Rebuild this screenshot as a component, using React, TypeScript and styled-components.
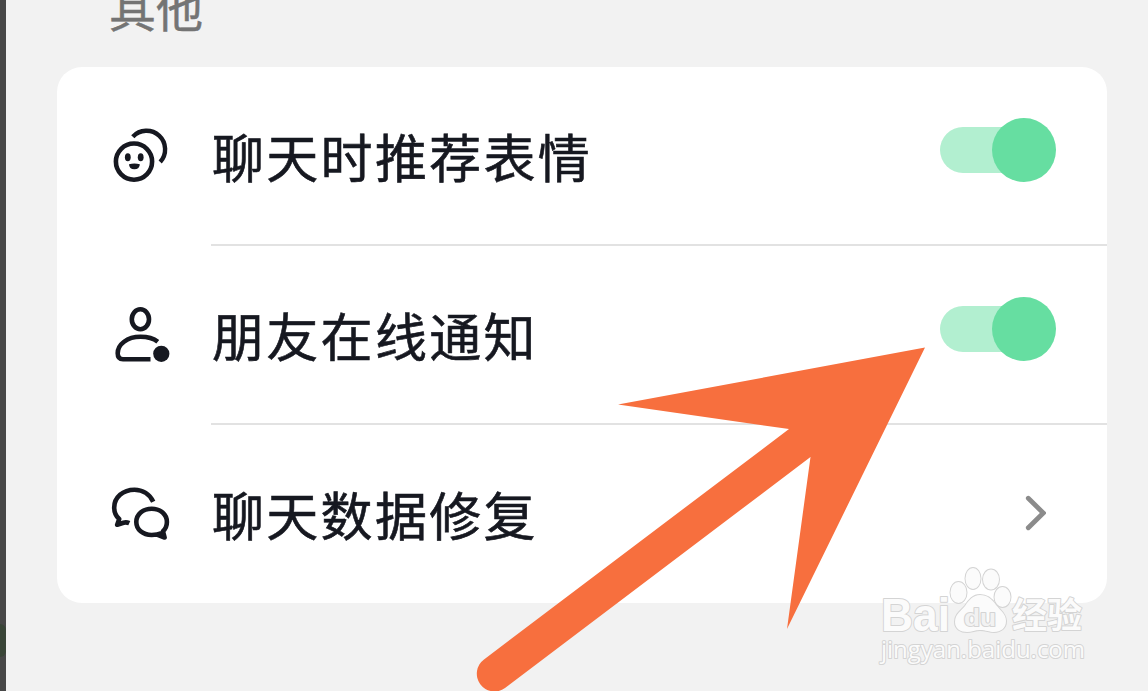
import type { ReactNode } from "react";
import styled, { createGlobalStyle } from "styled-components";

const GlobalStyle = createGlobalStyle`
  * {
    box-sizing: border-box;
  }

  body {
    margin: 0;
    overflow: hidden;
    background-color: #f2f2f2;
    font-family: "Noto Sans CJK SC", sans-serif;
  }
`;

const Page = styled.div`
  position: relative;
  display: flex;
  width: 1148px;
  height: 691px;
  overflow: hidden;
  background-color: #f2f2f2;
`;

const SideEdge = styled.div`
  flex: none;
  width: 6px;
  padding-top: 624px;
  background-color: #484848;
`;

const EdgeSpot = styled.div`
  height: 33px;
  border-radius: 0 6px 6px 0;
  background-color: #3a4638;
`;

const Content = styled.main`
  flex: 1;
  padding: 0 41px 0 51px;
`;

const SectionTitle = styled.h2`
  height: 90px;
  margin: -23px 0 0;
  padding-left: 52px;
  color: #747474;
  font-size: 47px;
  font-weight: 400;
  line-height: 60px;
  -webkit-text-stroke: 0.5px #747474;
`;

const Card = styled.section`
  height: 536px;
  overflow: hidden;
  border-radius: 25px;
  background-color: #fff;
`;

const Row = styled.div`
  display: flex;
  height: 179px;
  padding-left: 53px;
`;

const IconBox = styled.div`
  flex: none;
  width: 101px;
  padding-top: 58px;

  svg {
    display: block;
  }
`;

const RowBody = styled.div<{ $divider?: boolean }>`
  flex: 1;
  display: flex;
  justify-content: space-between;
  align-items: flex-start;
  padding: 49px 51px 0 0;
  border-bottom: ${(props) => (props.$divider ? "2px solid #e2e2e2" : "none")};
`;

const Label = styled.span`
  padding-left: 1px;
  color: #161820;
  font-size: 52px;
  line-height: 80px;
  letter-spacing: 2.3px;
  white-space: nowrap;
  -webkit-text-stroke: 0.6px #161820;
`;

const SwitchButton = styled.button`
  display: flex;
  align-items: center;
  width: 116px;
  height: 64px;
  margin-top: 2px;
  padding: 0;
  border: none;
  background: none;
`;

const Track = styled.span`
  flex: 1;
  height: 46px;
  margin-right: -32px;
  border-radius: 23px 0 0 23px;
  background-color: #b2efd0;
`;

const Knob = styled.span`
  width: 64px;
  height: 64px;
  border-radius: 50%;
  background-color: #66dea1;
`;

const ChevronBox = styled.div`
  padding: 16px 10px 0 0;

  svg {
    display: block;
  }
`;

const Arrow = styled.svg`
  position: absolute;
  top: 0;
  left: 0;
  pointer-events: none;
`;

const Watermark = styled.svg`
  position: absolute;
  left: 870px;
  top: 560px;
  pointer-events: none;
`;

const StickerIcon = () => (
  <svg width="60" height="60" viewBox="0 0 60 60" fill="none" stroke="#161820">
    <circle cx="24" cy="36.6" r="18.1" strokeWidth="4.6" />
    <path d="M22.8 11.8A17.6 17.6 0 0 1 50.2 37" strokeWidth="4.4" />
    <g fill="#161820" stroke="none">
      <ellipse cx="17.8" cy="32.2" rx="2.9" ry="4" />
      <ellipse cx="30.7" cy="32.2" rx="2.9" ry="4" />
      <path d="M19 39.2Q24.3 37.9 29.8 39.2Q29.7 44.3 24.4 44.3Q19.1 44.3 19 39.2Z" />
    </g>
  </svg>
);

const FriendIcon = () => (
  <svg width="60" height="60" viewBox="0 0 60 60" fill="none" stroke="#161820" strokeWidth="4.6">
    <ellipse cx="30.4" cy="15.3" rx="8.6" ry="10" />
    <path d="M47.8 37.8C43.5 34.4 37.5 32.8 30.5 32.8C17 32.8 7.7 40.5 7.7 49.2C7.7 53.2 9.5 55.2 13 55.2H40.5" />
    <circle cx="51.3" cy="49.8" r="8.1" fill="#161820" stroke="none" />
  </svg>
);

const ChatIcon = () => (
  <svg
    width="60"
    height="60"
    viewBox="0 0 60 60"
    fill="none"
    stroke="#161820"
    strokeWidth="4.6"
    strokeLinejoin="round"
  >
    <path d="M43.2 18.7C39.8 11.2 32.6 6.7 24.5 6.7C13 6.7 4.2 14.5 4.2 24.5C4.2 29.4 6 33.3 9.2 36.1L7.2 41.8L13.5 39.7Q16.3 38.8 19.3 40.2" />
    <path d="M51.7 50.1C49 51.3 45.5 52 41.7 52C32.7 52 26.3 46.5 26.3 39C26.3 31.4 32.8 25.8 41.7 25.8C50.5 25.8 56.9 31.4 56.9 39C56.9 42.7 55.6 45.8 53 48.2L54.6 54.5L47 51.6" />
  </svg>
);

interface SettingRowProps {
  icon: ReactNode;
  label: string;
  divider?: boolean;
  children: ReactNode;
}

const SettingRow = ({ icon, label, divider, children }: SettingRowProps) => (
  <Row>
    <IconBox>{icon}</IconBox>
    <RowBody $divider={divider}>
      <Label>{label}</Label>
      {children}
    </RowBody>
  </Row>
);

const Switch = () => (
  <SwitchButton role="switch" aria-checked="true">
    <Track />
    <Knob />
  </SwitchButton>
);

const App = () => {
  return (
    <>
      <GlobalStyle />
      <Page>
        <SideEdge>
          <EdgeSpot />
        </SideEdge>
        <Content>
          <SectionTitle>其他</SectionTitle>
          <Card>
            <SettingRow icon={<StickerIcon />} label="聊天时推荐表情" divider>
              <Switch />
            </SettingRow>
            <SettingRow icon={<FriendIcon />} label="朋友在线通知" divider>
              <Switch />
            </SettingRow>
            <SettingRow icon={<ChatIcon />} label="聊天数据修复">
              <ChevronBox>
                <svg width="30" height="46" viewBox="0 0 30 46" fill="none">
                  <path
                    d="M12.3 8.3L27.3 23L12.3 37.8"
                    stroke="#8b8b8b"
                    strokeWidth="4.8"
                    strokeLinecap="round"
                  />
                </svg>
              </ChevronBox>
            </SettingRow>
          </Card>
        </Content>
        <Arrow width="1148" height="691" viewBox="0 0 1148 691">
          <path
            d="M925 347.5L618 404.5L789 429L484 659.5A17.5 17.5 0 0 0 505 688L810.5 457L787 629Z"
            fill="#f76f3e"
          />
        </Arrow>
        <Watermark width="230" height="110" viewBox="0 0 230 110">
          <g fill="#fbfbfb" stroke="#d4d4d4" strokeWidth="2" paintOrder="stroke" strokeLinejoin="round">
            <text
              x="11"
              y="71"
              fontFamily="Liberation Sans"
              fontWeight="700"
              fontSize="46"
              textLength="69"
              lengthAdjust="spacingAndGlyphs"
            >
              Bai
            </text>
            <ellipse cx="103" cy="18.5" rx="7.5" ry="10.5" />
            <ellipse cx="121" cy="19.5" rx="8" ry="10" />
            <ellipse cx="88.5" cy="32.5" rx="8" ry="10.5" />
            <ellipse cx="132.5" cy="37" rx="8" ry="10" />
            <path d="M110 35C103 35 99 40 95 46C91 51 85 54 85 62C85 69 91 72 97 72C102 72 105 70 110 70C116 70 119 72 124 72C131 72 136 68 136 61C136 54 130 50 126 45C122 39 117 35 110 35Z" />
            <text
              x="94"
              y="66"
              fontFamily="Liberation Sans"
              fontWeight="700"
              fontSize="23"
              fill="#f2f2f2"
              textLength="32"
              lengthAdjust="spacingAndGlyphs"
            >
              du
            </text>
            <text
              x="142"
              y="68"
              fontFamily="Noto Sans CJK SC"
              fontWeight="700"
              fontSize="35"
              textLength="70"
            >
              经验
            </text>
            <text x="11" y="98" fontFamily="Open Sans" fontSize="24" textLength="204">
              jingyan.baidu.com
            </text>
          </g>
        </Watermark>
      </Page>
    </>
  );
};

export default App;
